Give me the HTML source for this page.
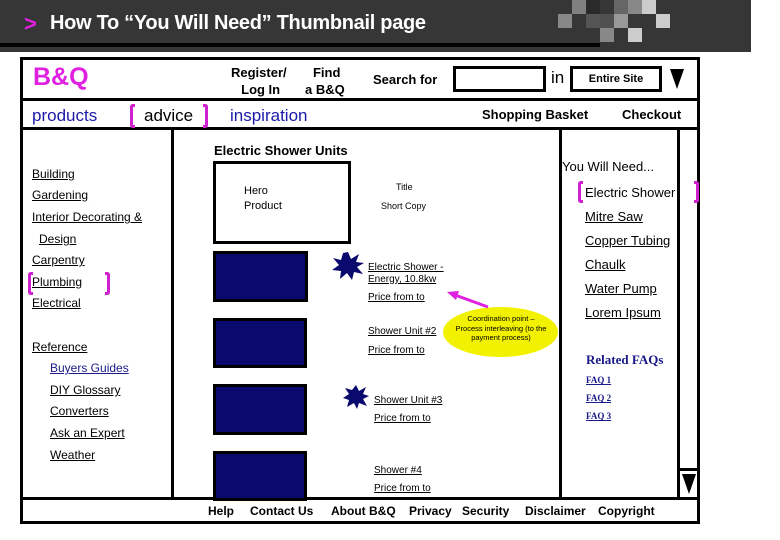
<!DOCTYPE html>
<html><head><style>
*{margin:0;padding:0;box-sizing:border-box}
body{width:780px;height:540px;background:#fff;position:relative;overflow:hidden;font-family:"Liberation Sans",sans-serif;color:#000}
.a{position:absolute;white-space:nowrap}
.u{text-decoration:underline}
.b{font-weight:bold}
.bk{position:absolute;background:#000}
.sq{position:absolute;width:14px;height:14px}
.bl{position:absolute;background:#0a0a6e;border:3px solid #000}
.br{position:absolute;border:3px solid #d020d0;border-right:none;border-radius:3px 0 0 3px;width:5px}
.brr{position:absolute;border:3px solid #d020d0;border-left:none;border-radius:0 3px 3px 0;width:5px}
.s{font-size:10px}
</style></head><body>
<div class="a" style="left:0;top:0;width:751px;height:52px;background:#363636"></div>
<div class="bk" style="left:0;top:43px;width:600px;height:4px"></div>
<div class="sq" style="left:572px;top:0;background:#808080"></div>
<div class="sq" style="left:586px;top:0;background:#2a2a2a"></div>
<div class="sq" style="left:614px;top:0;background:#666"></div>
<div class="sq" style="left:628px;top:0;background:#888"></div>
<div class="sq" style="left:642px;top:0;background:#ccc"></div>
<div class="sq" style="left:558px;top:14px;background:#888"></div>
<div class="sq" style="left:586px;top:14px;background:#555"></div>
<div class="sq" style="left:600px;top:14px;background:#505050"></div>
<div class="sq" style="left:614px;top:14px;background:#999"></div>
<div class="sq" style="left:656px;top:14px;background:#ccc"></div>
<div class="sq" style="left:600px;top:28px;background:#888"></div>
<div class="sq" style="left:628px;top:28px;background:#ccc"></div>
<div class="a b" style="left:24px;top:11px;font-size:22px;color:#e020e0">&gt;</div>
<div class="a b" style="left:50px;top:12px;font-size:20px;color:#fff;letter-spacing:-0.3px">How To “You Will Need” Thumbnail page</div>

<div class="a" style="left:20px;top:57px;width:680px;height:467px;border:3px solid #000"></div>
<div class="bk" style="left:20px;top:98px;width:680px;height:3px"></div>
<div class="bk" style="left:20px;top:127px;width:680px;height:3px"></div>
<div class="bk" style="left:171px;top:128px;width:3px;height:371px"></div>
<div class="bk" style="left:559px;top:128px;width:3px;height:371px"></div>
<div class="bk" style="left:677px;top:128px;width:3px;height:371px"></div>
<div class="bk" style="left:20px;top:497px;width:680px;height:3px"></div>
<div class="bk" style="left:678px;top:468px;width:21px;height:3px"></div>

<div class="a b" style="left:33px;top:63px;font-size:25px;color:#e020e0">B&amp;Q</div>
<div class="a b" style="left:231px;top:64px;font-size:13px;text-align:center;line-height:17px">Register/<br>&nbsp;Log In</div>
<div class="a b" style="left:305px;top:64px;font-size:13px;text-align:center;line-height:17px">&nbsp;Find<br>a B&amp;Q</div>
<div class="a b" style="left:373px;top:72px;font-size:13px">Search for</div>
<div class="a" style="left:453px;top:66px;width:93px;height:26px;border:3px solid #000"></div>
<div class="a" style="left:551px;top:68px;font-size:17px">in</div>
<div class="a b" style="left:570px;top:66px;width:92px;height:26px;border:3px solid #000;font-size:11px;text-align:center;line-height:20px">Entire Site</div>
<svg class="a" style="left:669px;top:68px" width="16" height="22"><polygon points="1,1 15,1 8,21" fill="#000"/></svg>

<div class="a" style="left:32px;top:106px;font-size:17px;color:#1a1aa8">products</div>
<div class="br" style="left:130px;top:104px;height:24px"></div>
<div class="a" style="left:144px;top:106px;font-size:17px">advice</div>
<div class="brr" style="left:203px;top:104px;height:24px"></div>
<div class="a" style="left:230px;top:106px;font-size:17px;color:#1a1aa8">inspiration</div>
<div class="a b" style="left:482px;top:107px;font-size:13px">Shopping Basket</div>
<div class="a b" style="left:622px;top:107px;font-size:13px">Checkout</div>

<div class="a u" style="left:32px;top:167px;font-size:12px">Building</div>
<div class="a u" style="left:32px;top:188px;font-size:12px">Gardening</div>
<div class="a u" style="left:32px;top:210px;font-size:12px">Interior Decorating &amp;</div>
<div class="a u" style="left:39px;top:232px;font-size:12px">Design</div>
<div class="a u" style="left:32px;top:253px;font-size:12px">Carpentry</div>
<div class="br" style="left:28px;top:272px;height:23px"></div>
<div class="a u" style="left:32px;top:275px;font-size:12px">Plumbing</div>
<div class="brr" style="left:105px;top:272px;height:23px"></div>
<div class="a u" style="left:32px;top:296px;font-size:12px">Electrical</div>
<div class="a u" style="left:32px;top:340px;font-size:12px">Reference</div>
<div class="a u" style="left:50px;top:361px;font-size:12px;color:#1a1a8a">Buyers Guides</div>
<div class="a u" style="left:50px;top:383px;font-size:12px">DIY Glossary</div>
<div class="a u" style="left:50px;top:404px;font-size:12px">Converters</div>
<div class="a u" style="left:50px;top:426px;font-size:12px">Ask an Expert</div>
<div class="a u" style="left:50px;top:448px;font-size:12px">Weather</div>

<div class="a b" style="left:214px;top:143px;font-size:13px">Electric Shower Units</div>
<div class="a" style="left:213px;top:161px;width:138px;height:83px;border:3px solid #000"></div>
<div class="a" style="left:244px;top:184px;font-size:11px;line-height:15px">Hero<br>Product</div>
<div class="a" style="left:396px;top:182px;font-size:9px">Title</div>
<div class="a" style="left:381px;top:201px;font-size:9px">Short Copy</div>
<div class="bl" style="left:213px;top:251px;width:95px;height:51px"></div>
<div class="bl" style="left:213px;top:318px;width:94px;height:50px"></div>
<div class="bl" style="left:213px;top:384px;width:94px;height:51px"></div>
<div class="bl" style="left:213px;top:451px;width:94px;height:50px"></div>
<svg class="a" style="left:331px;top:251px" width="34" height="30"><polygon points="17,1 20,8 28,3 25,11 33,12 26,16 32,23 23,21 21,29 16,22 9,28 10,20 1,19 8,14 2,7 10,9 12,2" fill="#0a0a6e"/></svg>
<svg class="a" style="left:342px;top:384px" width="28" height="26"><polygon points="14,1 17,7 24,3 21,10 27,12 21,15 25,22 17,19 15,25 12,19 5,23 7,16 1,14 7,10 3,4 10,6" fill="#0a0a6e"/></svg>
<div class="a u s" style="left:368px;top:262px;line-height:12px">Electric Shower -<br>Energy, 10.8kw</div>
<div class="a u s" style="left:368px;top:292px">Price from to</div>
<div class="a u s" style="left:368px;top:326px">Shower Unit #2</div>
<div class="a u s" style="left:368px;top:345px">Price from to</div>
<div class="a u s" style="left:374px;top:395px">Shower Unit #3</div>
<div class="a u s" style="left:374px;top:413px">Price from to</div>
<div class="a u s" style="left:374px;top:465px">Shower #4</div>
<div class="a u s" style="left:374px;top:483px">Price from to</div>
<div class="a" style="left:443px;top:307px;width:115px;height:50px;background:#f2f200;border-radius:50%"></div>
<div class="a" style="left:455px;top:314px;width:92px;font-size:7.5px;line-height:9.5px;text-align:center;white-space:normal">Coordination point – Process interleaving (to the payment process)</div>
<svg class="a" style="left:445px;top:290px" width="45" height="20"><line x1="43" y1="17" x2="10" y2="5" stroke="#e020e0" stroke-width="3"/><polygon points="2,2 14,1 11,10" fill="#e020e0"/></svg>

<div class="a" style="left:562px;top:159px;font-size:13px">You Will Need...</div>
<div class="br" style="left:578px;top:181px;height:22px"></div>
<div class="a" style="left:585px;top:185px;font-size:13px;width:92px;overflow:hidden">Electric Shower</div>
<div class="brr" style="left:694px;top:181px;height:22px"></div>
<div class="a u" style="left:585px;top:209px;font-size:13px">Mitre Saw</div>
<div class="a u" style="left:585px;top:233px;font-size:13px;width:92px;overflow:hidden">Copper Tubing</div>
<div class="a u" style="left:585px;top:257px;font-size:13px">Chaulk</div>
<div class="a u" style="left:585px;top:281px;font-size:13px">Water Pump</div>
<div class="a u" style="left:585px;top:305px;font-size:13px">Lorem Ipsum</div>
<div class="a b" style="left:586px;top:352px;font-size:13px;color:#1a1a8a;font-family:'Liberation Serif',serif">Related FAQs</div>
<div class="a u b" style="left:586px;top:375px;font-size:9px;color:#1a1a8a;font-family:'Liberation Serif',serif">FAQ 1</div>
<div class="a u b" style="left:586px;top:393px;font-size:9px;color:#1a1a8a;font-family:'Liberation Serif',serif">FAQ 2</div>
<div class="a u b" style="left:586px;top:411px;font-size:9px;color:#1a1a8a;font-family:'Liberation Serif',serif">FAQ 3</div>
<svg class="a" style="left:682px;top:474px" width="14" height="20"><polygon points="0,0 14,0 7,20" fill="#000"/></svg>

<div class="a b" style="left:208px;top:504px;font-size:12px">Help</div>
<div class="a b" style="left:250px;top:504px;font-size:12px">Contact Us</div>
<div class="a b" style="left:331px;top:504px;font-size:12px">About B&amp;Q</div>
<div class="a b" style="left:409px;top:504px;font-size:12px">Privacy</div>
<div class="a b" style="left:462px;top:504px;font-size:12px">Security</div>
<div class="a b" style="left:525px;top:504px;font-size:12px">Disclaimer</div>
<div class="a b" style="left:598px;top:504px;font-size:12px">Copyright</div>
</body></html>
